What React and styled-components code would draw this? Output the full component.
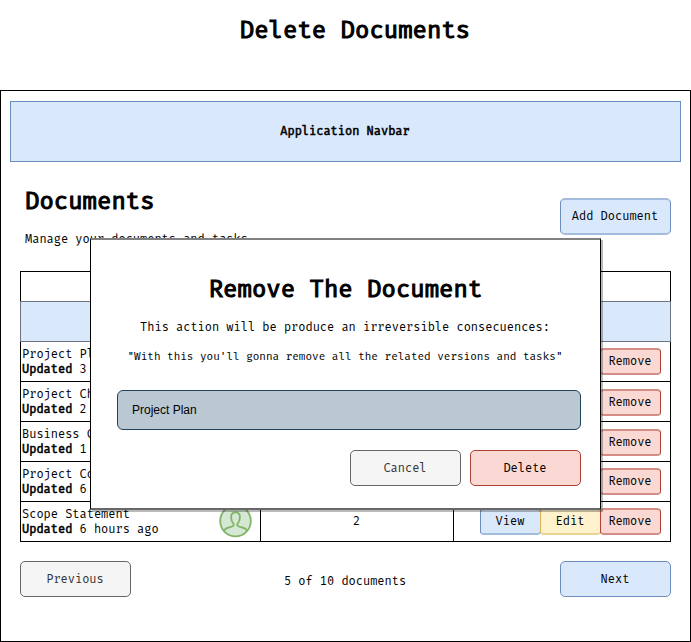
import React from "react";
import styled, { createGlobalStyle } from "styled-components";

const GlobalStyle = createGlobalStyle`
  * { box-sizing: border-box; }
  body { margin: 0; background: #fff; }
`;

const tones = {
  blue: { fill: "#dae8fc", line: "#6c8ebf", soft: "#a3bbdd", text: "#000" },
  yellow: { fill: "#fff2cc", line: "#d6b656", soft: "#ead491", text: "#000" },
  red: { fill: "#fad9d5", line: "#ae4132", soft: "#d48d84", text: "#000" },
  gray: { fill: "#f5f5f5", line: "#666666", soft: "#adadad", text: "#333" },
};

const Page = styled.main`
  position: relative;
  display: flex;
  flex-direction: column;
  width: 691px;
  height: 642px;
  overflow: hidden;
  color: #000;
  font-family: "Fira Mono", "Fira Code", "DejaVu Sans Mono", "Liberation Mono", monospace;
  font-size: 12px;
  line-height: 15px;
  letter-spacing: -0.01px;
  white-space: pre;
`;

const Strong = styled.strong`
  font-weight: normal;
  -webkit-text-stroke: 0.55px currentColor;
`;

const PageTitle = styled.h1`
  height: 90px;
  margin: 0;
  padding: 15px 0 0 19px;
  font-size: 24px;
  font-weight: normal;
  -webkit-text-stroke: 1.1px currentColor;
  line-height: 30px;
  letter-spacing: 0;
  text-align: center;
`;

const Frame = styled.section`
  flex: 1;
  display: flex;
  flex-direction: column;
  border: 1px solid #000;
  padding: 10px 9px 0;
`;

const Navbar = styled.nav`
  display: flex;
  align-items: center;
  justify-content: center;
  height: 61px;
  flex: none;
  background: #dae8fc;
  border: 1px solid #6c8ebf;
  padding: 0 1px 1px 0;
`;

const Content = styled.div`
  padding: 0 10px;
`;

const Header = styled.header`
  display: flex;
  justify-content: space-between;
  height: 109px;
`;

const Heading = styled.h2`
  margin: 0 0 16px;
  padding: 24px 0 0 5px;
  font-size: 24px;
  font-weight: normal;
  -webkit-text-stroke: 1.1px currentColor;
  line-height: 30px;
  letter-spacing: 0;
`;

const Subtitle = styled.p`
  margin: 0;
  padding-left: 5px;
`;

const Button = styled.button`
  display: flex;
  align-items: center;
  justify-content: center;
  width: 111px;
  height: 36px;
  padding: 1px 1px 0 0;
  font: inherit;
  letter-spacing: inherit;
  border: 1px solid ${(p) => tones[p.$tone].line};
  border-radius: 5px;
  background: ${(p) => tones[p.$tone].fill};
  color: ${(p) => tones[p.$tone].text};
`;

const AddButton = styled(Button)`
  height: 37px;
  margin-top: 36px;
  border-width: 2px 1px;
  border-top-color: #a3bbdd;
  border-bottom-color: #a3bbdd;
  padding-top: 0;
`;

const Table = styled.div`
  width: 651px;
  border: 1px solid #000;
`;

const TableTop = styled.div`
  height: 29px;
`;

const TableHead = styled.div`
  height: 41px;
  margin: 0 -1px;
  background: #dae8fc;
  border: 1px solid #6d7480;
`;

const Row = styled.div`
  display: grid;
  grid-template-columns: 239px 194px 1fr;
  height: 40px;
  border-bottom: 1px solid #000;
  &:last-child { height: 39px; border-bottom: 0; }
`;

const DocumentCell = styled.div`
  display: flex;
  justify-content: space-between;
  padding: 5px 8px 0 1px;
`;

const CountCell = styled.div`
  display: flex;
  align-items: center;
  justify-content: center;
  border: solid #000;
  border-width: 0 1px;
  padding: 0 1px 0 0;
`;

const ActionCell = styled.div`
  display: flex;
  justify-content: flex-end;
  padding: ${(p) => p.$top}px 9px 0 0;
`;

const RowButton = styled(Button)`
  width: 61px;
  height: 27px;
  border-radius: 4px;
  border-width: 2px 1px;
  border-top-color: ${(p) => tones[p.$tone].soft};
  border-bottom-color: ${(p) => tones[p.$tone].soft};
  padding-top: 0;
  & + & { margin-left: -1px; }
`;

const Avatar = styled.svg`
  width: 34px;
  height: 34px;
  margin-top: -3px;
  flex: none;
`;

const Pager = styled.footer`
  display: flex;
  align-items: center;
  justify-content: space-between;
  margin-top: 19px;
`;

const PageCount = styled.span`
  padding: 4px 1px 0 0;
`;

const Modal = styled.section`
  position: absolute;
  left: 90px;
  top: 238px;
  width: 511px;
  height: 272px;
  padding: 34px 19px 0 26px;
  background: #fff;
  border: solid;
  border-width: 2px 1px;
  border-color: #808080 #000 #686868;
  box-shadow: 2px 2px 0 rgba(0, 0, 0, 0.27);
  text-align: center;
`;

const ModalTitle = styled.h2`
  margin: 0 0 16px;
  padding-right: 7px;
  font-size: 24px;
  font-weight: normal;
  -webkit-text-stroke: 1.1px currentColor;
  line-height: 30px;
  letter-spacing: 0;
`;

const Message = styled.p`
  margin: 0 0 ${(p) => (p.$small ? 26 : 14)}px;
  padding-right: 8px;
  font-size: ${(p) => (p.$small ? 11 : 12)}px;
`;

const NameField = styled.div`
  display: flex;
  align-items: center;
  height: 40px;
  padding: 0 14px;
  border: 1px solid #23445d;
  border-radius: 6px;
  background: #bac8d3;
  font-family: "Liberation Sans", Arial, sans-serif;
  letter-spacing: 0;
`;

const ModalActions = styled.div`
  display: flex;
  justify-content: flex-end;
  gap: 9px;
  margin-top: 20px;
`;

const documents = [
  { name: "Project Plan", updated: "3 hours ago", top: 6 },
  { name: "Project Charter", updated: "2 hours ago", top: 7 },
  { name: "Business Case", updated: "1 hour ago", top: 7 },
  { name: "Project Contract", updated: "6 hours ago", top: 6 },
  { name: "Scope Statement", updated: "6 hours ago", top: 6 },
];

const UserAvatar = () => (
  <Avatar viewBox="0 0 34 34" fill="#d5e8d4" stroke="#82b366" strokeWidth="1.8">
    <circle cx="17.5" cy="17" r="15.3" />
    <path
      fill="none"
      d="M6 27.5C6.5 24.5 8.5 24 12 23.2C15.5 22.5 16 21.7 15.6 19.8C13.8 18 13.1 15.8 13.1 13.2C13.1 10.2 14.8 8.4 17.5 8.4C20.2 8.4 21.9 10.2 21.9 13.2C21.9 15.8 21.2 18 19.4 19.8C19 21.7 19.5 22.5 23 23.2C26.5 24 28.5 24.5 29 27.5"
    />
  </Avatar>
);

export default function App() {
  return (
    <>
      <GlobalStyle />
      <Page>
        <PageTitle>Delete Documents</PageTitle>
        <Frame>
          <Navbar>
            <Strong>Application Navbar</Strong>
          </Navbar>
          <Content>
            <Header>
              <div>
                <Heading>Documents</Heading>
                <Subtitle>Manage your documents and tasks.</Subtitle>
              </div>
              <AddButton $tone="blue">Add Document</AddButton>
            </Header>
            <Table>
              <TableTop />
              <TableHead />
              {documents.map((doc) => (
                <Row key={doc.name}>
                  <DocumentCell>
                    <div>
                      {doc.name}
                      <br />
                      <Strong>Updated</Strong> {doc.updated}
                    </div>
                    <UserAvatar />
                  </DocumentCell>
                  <CountCell>2</CountCell>
                  <ActionCell $top={doc.top}>
                    <RowButton $tone="blue">View</RowButton>
                    <RowButton $tone="yellow">Edit</RowButton>
                    <RowButton $tone="red">Remove</RowButton>
                  </ActionCell>
                </Row>
              ))}
            </Table>
            <Pager>
              <Button $tone="gray">Previous</Button>
              <PageCount>5 of 10 documents</PageCount>
              <Button $tone="blue">Next</Button>
            </Pager>
          </Content>
        </Frame>
        <Modal>
          <ModalTitle>Remove The Document</ModalTitle>
          <Message>This action will be produce an irreversible consecuences:</Message>
          <Message $small>"With this you'll gonna remove all the related versions and tasks"</Message>
          <NameField>Project Plan</NameField>
          <ModalActions>
            <Button $tone="gray">Cancel</Button>
            <Button $tone="red">Delete</Button>
          </ModalActions>
        </Modal>
      </Page>
    </>
  );
}
